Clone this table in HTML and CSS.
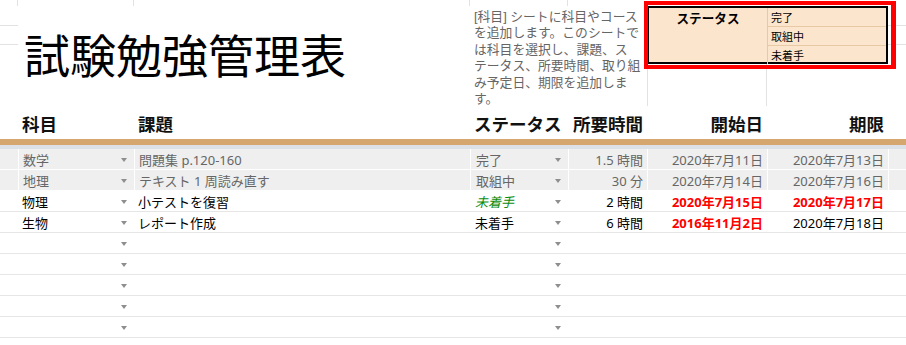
FILE: index.html
```html
<!DOCTYPE html>
<html lang="ja">
<head>
<meta charset="utf-8">
<title>試験勉強管理表</title>
<link rel="stylesheet" href="styles.css">
</head>
<body>
<div class="sheet">
  <div class="top">
    <div class="gl gl-c1r1"></div>
    <div class="gl gl-c2r1"></div>
    <div class="gl gl-c3r1"></div>
    <div class="gl gl-c4r1"></div>
    <div class="gl gl-c1r2"></div>
    <div class="gl gl-c1r3"></div>
    <div class="gl gl-c8r2"></div>
    <div class="gl gl-c8r3"></div>
    <div class="gl gl-c6r5"></div>
    <h1 class="title">試験勉強管理表</h1>
    <p class="desc">[科目] シートに科目やコース<br>を追加します。このシートで<br>は科目を選択し、課題、ス<br>テータス、所要時間、取り組<br>み予定日、期限を追加しま<br>す。</p>
    <div class="status-box">
      <div class="sb-label">ステータス</div>
      <div class="sb-item">完了</div>
      <div class="sb-item">取組中</div>
      <div class="sb-item sb-last">未着手</div>
    </div>
    <div class="highlight"></div>
  </div>

  <div class="row head">
    <div class="cell"></div>
    <div class="cell">科目</div>
    <div class="cell">課題</div>
    <div class="cell">ステータス</div>
    <div class="cell right">所要時間</div>
    <div class="cell right">開始日</div>
    <div class="cell right">期限</div>
    <div class="cell"></div>
  </div>
  <div class="band-tan"></div>
  <div class="band-blue"></div>

  <div class="row data done">
    <div class="cell"></div>
    <div class="cell dd"><span>数学</span><i class="arrow"></i></div>
    <div class="cell">問題集 p.120-160</div>
    <div class="cell dd"><span>完了</span><i class="arrow"></i></div>
    <div class="cell right">1.5 時間</div>
    <div class="cell right">2020年7月11日</div>
    <div class="cell right">2020年7月13日</div>
    <div class="cell"></div>
  </div>
  <div class="row data done">
    <div class="cell"></div>
    <div class="cell dd"><span>地理</span><i class="arrow"></i></div>
    <div class="cell">テキスト 1 周読み直す</div>
    <div class="cell dd"><span>取組中</span><i class="arrow"></i></div>
    <div class="cell right">30 分</div>
    <div class="cell right">2020年7月14日</div>
    <div class="cell right">2020年7月16日</div>
    <div class="cell"></div>
  </div>
  <div class="row data">
    <div class="cell"></div>
    <div class="cell dd"><span>物理</span><i class="arrow"></i></div>
    <div class="cell">小テストを復習</div>
    <div class="cell dd"><span class="green">未着手</span><i class="arrow"></i></div>
    <div class="cell right">2 時間</div>
    <div class="cell right alert">2020年7月15日</div>
    <div class="cell right alert">2020年7月17日</div>
    <div class="cell"></div>
  </div>
  <div class="row data">
    <div class="cell"></div>
    <div class="cell dd"><span>生物</span><i class="arrow"></i></div>
    <div class="cell">レポート作成</div>
    <div class="cell dd"><span>未着手</span><i class="arrow"></i></div>
    <div class="cell right">6 時間</div>
    <div class="cell right alert">2016年11月2日</div>
    <div class="cell right">2020年7月18日</div>
    <div class="cell"></div>
  </div>
  <div class="row data"><div class="cell"></div><div class="cell dd"><span></span><i class="arrow"></i></div><div class="cell"></div><div class="cell dd"><span></span><i class="arrow"></i></div><div class="cell"></div><div class="cell"></div><div class="cell"></div><div class="cell"></div></div>
  <div class="row data"><div class="cell"></div><div class="cell dd"><span></span><i class="arrow"></i></div><div class="cell"></div><div class="cell dd"><span></span><i class="arrow"></i></div><div class="cell"></div><div class="cell"></div><div class="cell"></div><div class="cell"></div></div>
  <div class="row data"><div class="cell"></div><div class="cell dd"><span></span><i class="arrow"></i></div><div class="cell"></div><div class="cell dd"><span></span><i class="arrow"></i></div><div class="cell"></div><div class="cell"></div><div class="cell"></div><div class="cell"></div></div>
  <div class="row data"><div class="cell"></div><div class="cell dd"><span></span><i class="arrow"></i></div><div class="cell"></div><div class="cell dd"><span></span><i class="arrow"></i></div><div class="cell"></div><div class="cell"></div><div class="cell"></div><div class="cell"></div></div>
  <div class="row data"><div class="cell"></div><div class="cell dd"><span></span><i class="arrow"></i></div><div class="cell"></div><div class="cell dd"><span></span><i class="arrow"></i></div><div class="cell"></div><div class="cell"></div><div class="cell"></div><div class="cell"></div></div>
  <div class="row data"><div class="cell"></div><div class="cell dd"><span></span><i class="arrow"></i></div><div class="cell"></div><div class="cell dd"><span></span><i class="arrow"></i></div><div class="cell"></div><div class="cell"></div><div class="cell"></div><div class="cell"></div></div>
</div>
</body>
</html>
```
FILE: styles.css
```css
* { box-sizing: border-box; }
html, body {
  margin: 0;
  padding: 0;
  background: #fff;
  width: 906px;
  height: 345px;
  overflow: hidden;
}
body {
  font-family: "Noto Sans", "Noto Sans CJK JP", sans-serif;
  color: #000;
}
.sheet {
  width: 906px;
}

/* ---------- top area ---------- */
.top {
  position: relative;
  display: grid;
  grid-template-columns: 18px 116px 336px 98px 79px 120px 121px 18px;
  grid-template-rows: 6px 20px 19px 19px 42px;
  height: 106px;
}
.gl { border: 0 solid #e2e2e2; }
.gl-c1r1 { grid-column: 1; grid-row: 1; border-right-width: 1px; }
.gl-c2r1 { grid-column: 2; grid-row: 1; border-right-width: 1px; }
.gl-c3r1 { grid-column: 3; grid-row: 1; border-right-width: 1px; }
.gl-c4r1 { grid-column: 4; grid-row: 1; border-right-width: 1px; }
.gl-c1r2 { grid-column: 1; grid-row: 2; border-bottom-width: 1px; }
.gl-c1r3 { grid-column: 1; grid-row: 3; border-bottom-width: 1px; }
.gl-c8r2 { grid-column: 8; grid-row: 2; border-bottom-width: 1px; }
.gl-c8r3 { grid-column: 8; grid-row: 3; border-bottom-width: 1px; }
.gl-c6r5 { grid-column: 6; grid-row: 5; border-left-width: 1px; border-right-width: 1px; }

.title {
  grid-column: 2 / 4;
  grid-row: 1 / 6;
  align-self: center;
  margin: 0;
  padding-left: 6px;
  font-family: "Noto Sans CJK JP", sans-serif;
  font-weight: 400;
  font-size: 46px;
  line-height: 46px;
  color: #000;
}
.desc {
  grid-column: 4 / 6;
  grid-row: 2 / 6;
  margin: 0;
  padding: 3px 0 0 4px;
  font-family: "Liberation Sans", "Noto Sans CJK JP", sans-serif;
  font-size: 12.8px;
  line-height: 16.4px;
  color: #666;
  white-space: nowrap;
}
.status-box {
  grid-column: 6 / 8;
  grid-row: 2 / 5;
  display: grid;
  grid-template-columns: 119px 1fr;
  grid-template-rows: 1fr 1fr 1fr;
  background: #fce5cd;
  border: 2px solid #000;
  font-family: "Noto Sans CJK JP", sans-serif;
}
.sb-label {
  grid-column: 1;
  grid-row: 1 / 4;
  border-right: 1px solid #e8c9a6;
  text-align: center;
  font-weight: 700;
  font-size: 12.6px;
  line-height: 20px;
  padding-top: 0;
}
.sb-item {
  grid-column: 2;
  font-size: 11px;
  line-height: 18px;
  padding-left: 3px;
  border-bottom: 1px solid #e8c9a6;
}
.sb-last { border-bottom: 0; }
.highlight {
  position: absolute;
  left: 644px;
  top: 1px;
  width: 252px;
  height: 68px;
  border: 4px solid #ff0000;
  border-right-width: 5px;
}

/* ---------- table ---------- */
.row {
  display: grid;
  grid-template-columns: 18px 116px 336px 98px 79px 120px 121px 18px;
}
.cell {
  display: flex;
  align-items: center;
  padding: 0 4px;
  white-space: nowrap;
  overflow: hidden;
}
.cell.right { justify-content: flex-end; }

.head {
  height: 33px;
  font-family: "Noto Sans CJK JP", sans-serif;
  font-weight: 700;
  font-size: 17.5px;
  color: #111;
}
.head .cell { padding-top: 1px; }
.band-tan {
  height: 6px;
  background: #d5a66d;
}
.band-blue {
  height: 4px;
  background: #dce1e8;
}

.data {
  height: 21px;
  border-bottom: 1px solid #e6e6e6;
  font-size: 13px;
  color: #000;
}
.data.done {
  background: #efefef;
  color: #666;
  border-bottom-color: #fff;
}
.data.done .cell + .cell { border-left: 1px solid #fff; }
.data .cell:nth-child(4) { padding-left: 5px; }
.cell.dd {
  justify-content: space-between;
  padding-right: 7px;
}
.arrow {
  display: block;
  width: 0;
  height: 0;
  border-left: 3.5px solid transparent;
  border-right: 3.5px solid transparent;
  border-top: 4px solid #8e8e8e;
  margin-top: 1px;
}
.green {
  color: #0b8c0b;
  font-style: italic;
}
.alert {
  color: #ff0000;
  font-weight: 700;
}
```
